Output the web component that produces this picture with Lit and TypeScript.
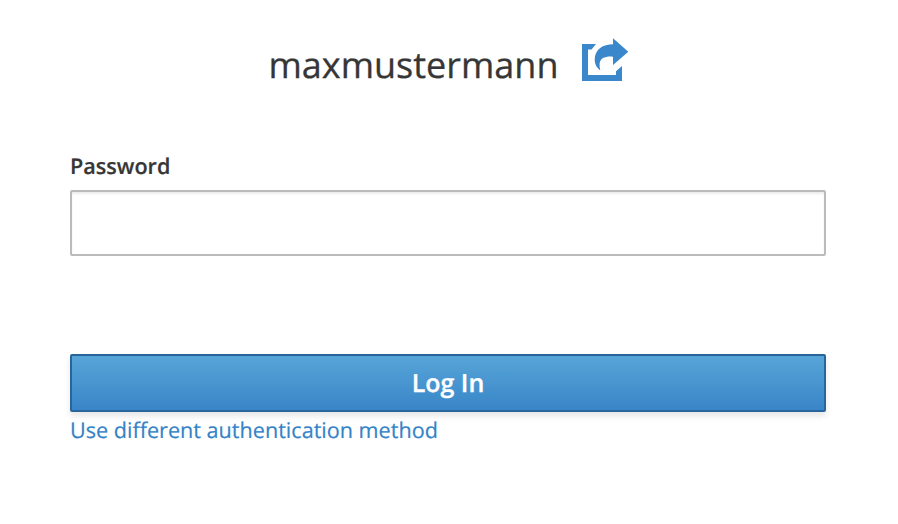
import { LitElement, html, css } from "lit";
import { customElement } from "lit/decorators.js";

@customElement("app-root")
export class AppRoot extends LitElement {
  static styles = css`
    :host { display: block; height: 524px; background: #fff; color: #363636; font-family: "Open Sans", sans-serif; overflow: hidden; text-rendering: geometricPrecision; }
    * { box-sizing: border-box; }
    .page { width: 756px; margin-left: 70px; display: flex; flex-direction: column; }
    .user { height: 52px; padding-left: 1px; margin-top: 38px; display: flex; justify-content: center; }
    .name { font-size: 36px; line-height: 54px; white-space: nowrap; -webkit-text-stroke: .3px; }
    .restart { width: 48px; height: 44px; margin-left: 22px; }
    .restart svg { display: block; fill: #3a87cb; }
    .label { margin-top: 62px; height: 30px; font-size: 21.6px; line-height: 30px; font-weight: 600; -webkit-text-stroke: .2px; }
    .input { display: block; width: 100%; margin: 8px 0 0; height: 66px; border: 2px solid #bbb; border-radius: 2px; box-shadow: inset 0 2px 2px rgba(3,3,3,.075); padding: 4px 12px; font: 24px "Open Sans", sans-serif; outline: 0; }
    .login { margin: 98px 0 0; height: 58px; padding: 0; border: 2px solid #27659b; border-radius: 2px; background: linear-gradient(#57a5d8, #3985c8); box-shadow: 0 4px 6px rgba(3,3,3,.1); color: #fff; font: 600 25px/54px "Open Sans", sans-serif; text-rendering: geometricPrecision; -webkit-text-stroke: .3px; }
    .other { align-self: flex-start; margin-top: 4px; font-size: 21.6px; line-height: 30px; color: #3383c8; text-decoration: none; white-space: nowrap; -webkit-text-stroke: .2px; }
  `;
  render() {
    return html`<main class="page">
      <div class="user">
        <span class="name">maxmustermann</span>
        <a class="restart" aria-label="Restart login"><svg width="48" height="44" viewBox="0 0 48 44"><path d="M1 6H15L10.5 11.5H7V37H35V33.3L41 28V43H1Z"/><path d="M32 0.3L47.3 13.7L32 27V18.7C24 18.2 19.5 20 18.6 25.5Q18.4 28.5 19.3 32.3C16 30 13.7 26.5 13.7 21.5C14 11 22 6.3 32 6.3Z"/></svg></a>
      </div>
      <label class="label" for="pw">Password</label>
      <input class="input" id="pw" type="password">
      <button class="login">Log In</button>
      <a class="other">Use different authentication method</a>
    </main>`;
  }
}
